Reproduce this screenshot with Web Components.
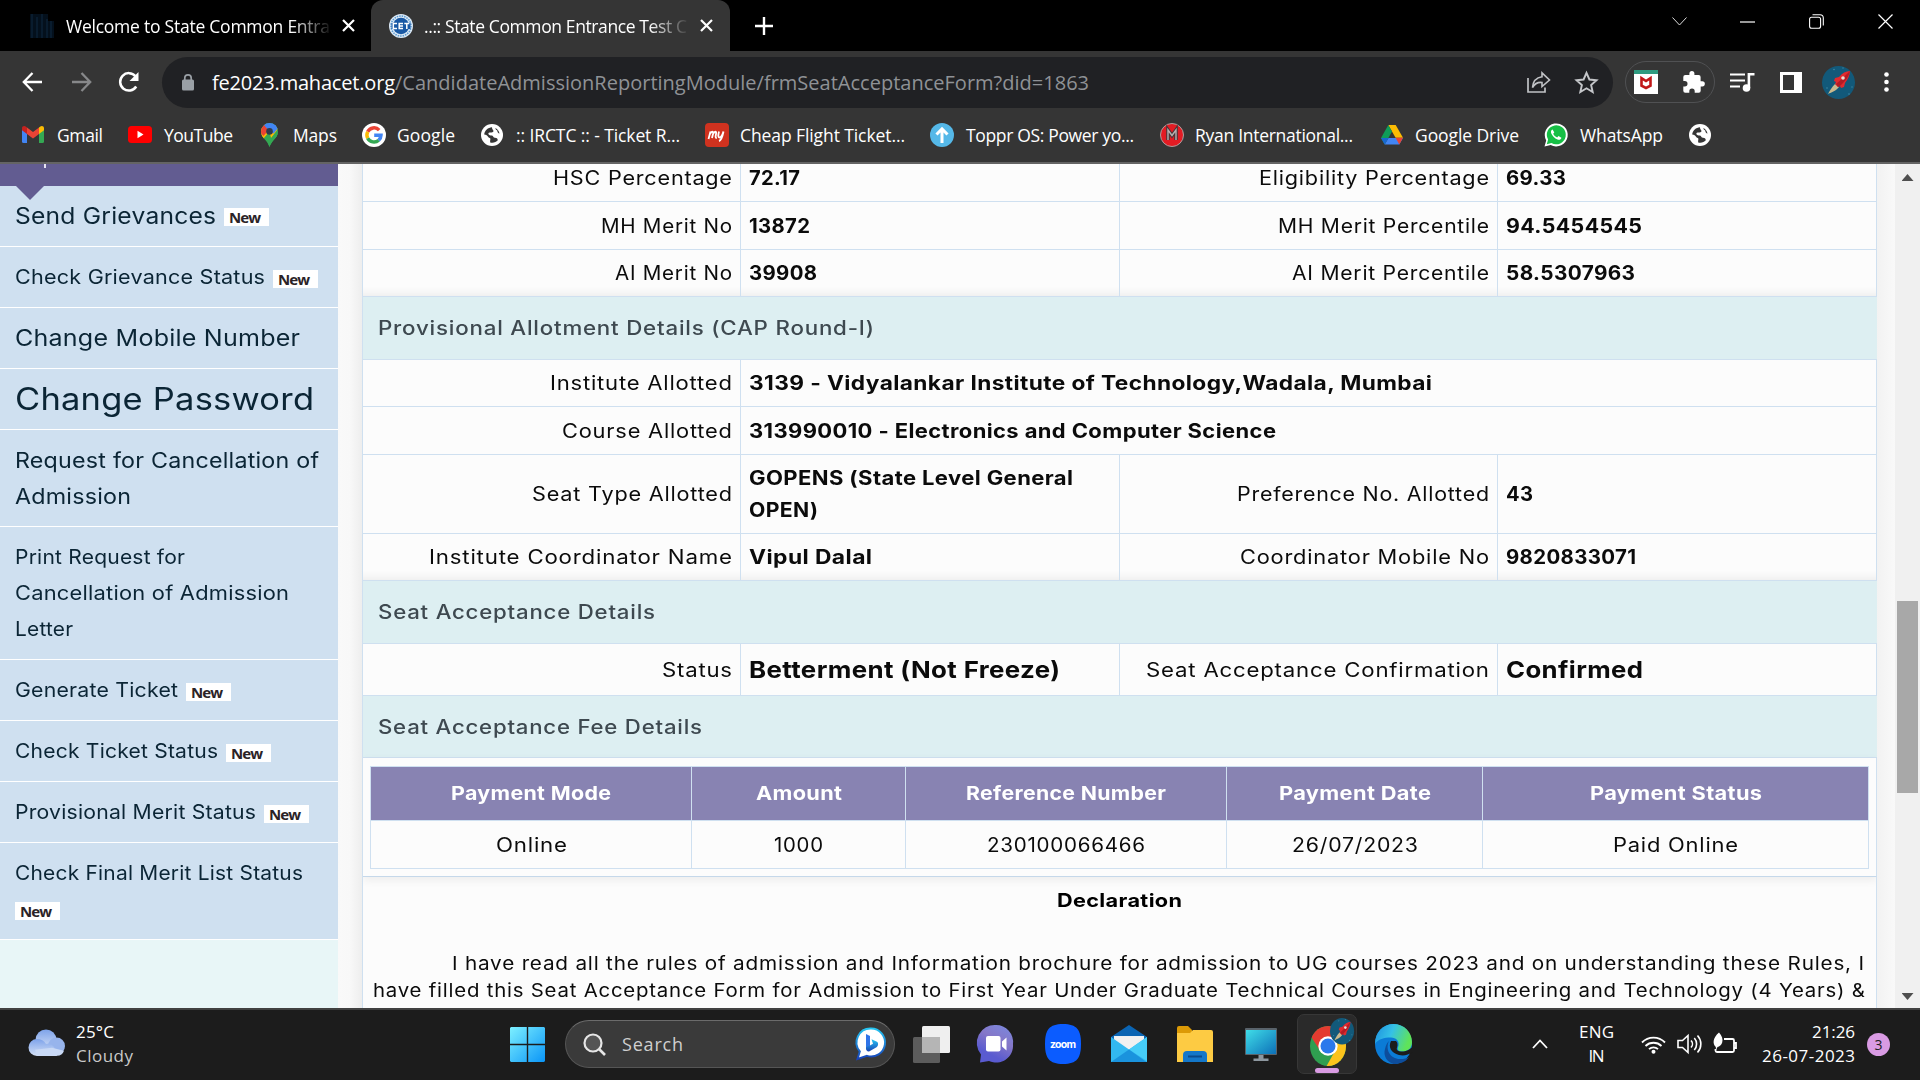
<!DOCTYPE html>
<html lang="en">
<head>
<meta charset="utf-8">
<title>State Common Entrance Test Cell</title>
<style>
html,body{margin:0;height:100%;overflow:hidden;background:#000}
body{display:flex;flex-direction:column;width:1920px;height:1080px}
</style>
</head>
<body>
<tab-strip></tab-strip>
<browser-toolbar></browser-toolbar>
<bookmarks-bar></bookmarks-bar>
<page-view></page-view>
<task-bar></task-bar>
<script>
const UI = '"Open Sans","Noto Sans",sans-serif';
const define = (name, css, html) => customElements.define(name, class extends HTMLElement {
  connectedCallback() {
    if (this.shadowRoot) return;
    const t = document.createElement('template');
    t.innerHTML = `<style>*,:host{box-sizing:border-box}${css}</style>${typeof html === 'function' ? html(this) : html}`;
    this.attachShadow({mode: 'open'}).append(t.content.cloneNode(true));
  }
});

/* Inline run of text that spans the width in "w": by tracking alone, or, where --track
   gives the tracking, by widening the letters. */
customElements.define('fit-text', class extends HTMLElement {
  connectedCallback() {
    if (this.shadowRoot) return;
    this.attachShadow({mode: 'open'}).innerHTML =
      '<style>:host{display:inline-block;white-space:nowrap;flex:none;text-align:left}span{display:inline-block;transform-origin:0 50%}</style><span><slot></slot></span>';
    const w = +this.getAttribute('w'), n = this.textContent.length, s = this.shadowRoot.querySelector('span');
    if (!w || n < 2) return;
    const track = parseFloat(getComputedStyle(this).getPropertyValue('--track'));
    if (isNaN(track)) {
      this.style.letterSpacing = ((w - s.getBoundingClientRect().width) / (n - 1)).toFixed(3) + 'px';
    } else {
      this.style.letterSpacing = track + 'px';
      s.style.transform = `scaleX(${(w / (s.getBoundingClientRect().width - track)).toFixed(4)})`;
    }
    this.style.width = w + 'px';
  }
});

const ROCKET = `<circle cx="16.5" cy="16.5" r="16.5" fill="#12597a"/><g fill="#3b87a5"><circle cx="12" cy="3.5" r=".8"/><circle cx="5" cy="22" r=".8"/><circle cx="27" cy="28" r=".8"/><circle cx="21" cy="2" r=".7"/><circle cx="30" cy="21" r=".7"/></g>
<path d="M13 18l4 3C14 25 10 26 6 28c2-4 4-7 7-10z" fill="#c9b98d"/><path d="M28 5c-4 0-8 2-11 6l-4 1-1 3 2 1-1 2 3 3 2-1 1 2 3-1 1-4c3-4 5-8 5-12z" fill="#e02a2f"/><path d="M28 5c-3 3-8 8-14 13l2 3 2-1c5-5 9-9 10-15z" fill="#b51b24"/><circle cx="21" cy="12" r="1.8" fill="#e8dcd4"/>`;
const GLOBE = `<circle cx="11" cy="11" r="11" fill="#fff"/><path d="M11 3.2C7 3.4 3.6 6.500 3.200 10.500c1.800.4 3.400 1 3.800 2.300.3 1 1.800.8 2.300 1.800.3.900-.4 1.800-.1 3.800 3 .8 5.800-.2 7.600-2.200-.2-1.700-1.200-2.300-2.800-2.400-1.900-.1-1.600-1.700-3-2.200-1.600-.6-3.200-.2-3.600-1.700-.3-1.400 1.300-1.600 2.600-1.500 1.500.1 2.700-.3 2.400-1.700-.2-1-1.500-1.300-1.400-3.500z" fill="#353535"/><path d="M14.500 4c-.3 1.300.6 2 1.800 2.600 0 1.900.8 2.700 2.200 2.900C18 7 16.500 5 14.500 4z" fill="#353535"/>`;
/* name: [width, height, markup] */
const ICONS = {
  fav1: [24,24,`<rect width="24" height="24" fill="#04101c"/><path d="M2 0v24M7 3v21M12 0v24M17 5v19M21 7v17" stroke="#0b2034" stroke-width="1.500"/><path d="M18 0h6v7h-6z" fill="#000"/>`],
  close: [13,13,`<path d="M1 1l11 11M12 1L1 12" stroke="#fff" stroke-width="2.200"/>`],
  cet: [24,24,`<circle cx="12" cy="12" r="12" fill="#dbe9f6"/><circle cx="12" cy="12" r="10" fill="none" stroke="#5c9ad0" stroke-width="1.500" stroke-dasharray="1.500 1"/><circle cx="12" cy="12" r="8.200" fill="#1959a5"/><path d="M2.500 9h19v6h-19z" fill="#1959a5"/><path d="M8 9.600H4.300v4.800H8M14 9.600h-3.800v4.800H14M10.200 12H14M15.300 9.600h5M17.800 9.600v5.400" fill="none" stroke="#fff" stroke-width="1.500"/>`],
  plus: [18,18,`<path d="M9 0v18M0 9h18" stroke="#fff" stroke-width="2.400"/>`],
  wchev: [15,9,`<path d="M.5.5l7 7.500 7-7.500" fill="none" stroke="#ddd" stroke-width="1"/>`],
  wmin: [15,2,`<path d="M0 1h15" stroke="#fff" stroke-width="1.200"/>`],
  wmax: [15,15,`<rect x=".6" y="3.300" width="11" height="11" rx="2" fill="none" stroke="#fff" stroke-width="1.100"/><path d="M3.500.8h7.500a3.300 3.300 0 0 1 3.300 3.300v7.400" fill="none" stroke="#fff" stroke-width="1.100"/>`],
  wclose: [15,15,`<path d="M.5.5l14 14M14.500.5l-14 14" stroke="#fff" stroke-width="1.200"/>`],
  back: [21,20,`<path d="M20 10H2M10.500 1L1.800 10l8.700 9" fill="none" stroke="#fff" stroke-width="2.300"/>`],
  fwd: [21,20,`<path d="M1 10h18M10.500 1l8.700 9-8.700 9" fill="none" stroke="#87888a" stroke-width="2.300"/>`],
  reload: [22,22,`<path d="M18.200 15.500A8.700 8.700 0 1 1 17.500 5.200" fill="none" stroke="#fff" stroke-width="2.500"/><path d="M20.500 1v9h-9z" fill="#fff"/>`],
  lock: [12,17,`<rect y="5.500" width="12" height="11" rx="1.500" fill="#9aa0a6"/><path d="M2.800 7V4a3.200 3.200 0 0 1 6.400 0v3" fill="none" stroke="#9aa0a6" stroke-width="1.700"/>`],
  share: [24,22,`<path d="M1 7v14h17v-4.500" fill="none" stroke="#c0c2c5" stroke-width="1.700"/><path d="M15 1.800L22.500 9 15 15.500v-4C10.500 11 7.500 13 5.500 16.500 6 10.500 9.500 6.600 15 5.800z" fill="none" stroke="#c0c2c5" stroke-width="1.600"/>`],
  star: [23,22,`<path d="M11.500 1.800l2.900 6.700 7.100.7-5.400 4.800 1.600 7-6.200-3.700L5.300 21l1.600-7L1.500 9.200l7.100-.7z" fill="none" stroke="#c4c6c9" stroke-width="1.900"/>`],
  mcafee: [24,24,`<rect width="24" height="24" fill="#fff"/><path d="M0 0h24v4H0z" fill="#2f9b80"/><path d="M7.500 8.200v7.500L12 18l4.500-2.300V8.200L12 11z" fill="none" stroke="#c01818" stroke-width="2.600"/>`],
  puzzle: [22,22,`<path d="M19.300 10.300h-1.700V6a2 2 0 0 0-2-2h-4.200V2.500a2.500 2.500 0 0 0-5 0V4H2.300a2 2 0 0 0-2 2v4.100h1.500a2.700 2.700 0 0 1 0 5.400H.3v4.200a2 2 0 0 0 2 2h4v-1.500a2.700 2.700 0 0 1 5.400 0v1.500h4a2 2 0 0 0 2-2v-4.300h1.600a2.550 2.550 0 0 0 0-5.100z" fill="#fff"/>`],
  queue: [25,21,`<path d="M0 2.500h15M0 8.500h15M0 14.500h10" stroke="#fff" stroke-width="2.200"/><circle cx="16.500" cy="16" r="3.800" fill="#fff"/><path d="M18.900 16V2.300h5.600" fill="none" stroke="#fff" stroke-width="2.600"/>`],
  panel: [22,21,`<path d="M0 0h22v21H0z" fill="#fff"/><path d="M3 3h11v15H3z" fill="#353535"/>`],
  rocket: [33,33,ROCKET],
  dots: [5,20,`<g fill="#fff"><circle cx="2.500" cy="2.500" r="2.300"/><circle cx="2.500" cy="10" r="2.300"/><circle cx="2.500" cy="17.500" r="2.300"/></g>`],
  gmail: [22,17,`<path d="M0 2v13.500A1.500 1.500 0 0 0 1.500 17H5V6z" fill="#4285f4"/><path d="M22 2v13.500a1.500 1.500 0 0 1-1.500 1.500H17V6z" fill="#34a853"/><path d="M17 1.500V8l5-3.700V2.200C22 .2 19.800-.6 18.300.6z" fill="#fbbc04"/><path d="M5 8V1.500l6 4.600 6-4.600V8l-6 4.500z" fill="#ea4335"/><path d="M0 2.200v2.100L5 8V1.500L3.700.6C2.200-.6 0 .2 0 2.200z" fill="#c5221f"/>`],
  youtube: [24,17,`<rect width="24" height="17" rx="3.500" fill="#f00"/><path d="M9.500 4.800v7.400l6-3.700z" fill="#fff"/>`],
  maps: [17,24,`<clipPath id="m"><path d="M8.500 0A8.300 8.300 0 0 0 0 8.400c0 4 2.200 6.200 4.300 8.700 1.700 2 3.300 4.200 4.200 6.900.9-2.700 2.500-4.900 4.200-6.900C14.800 14.600 17 12.400 17 8.400A8.300 8.300 0 0 0 8.500 0z"/></clipPath><g clip-path="url(#m)"><path d="M0 0h17v24H0z" fill="#34a853"/><path d="M8.500 8.400L0 18.500V5l4-2.500z" fill="#fbbc04"/><path d="M8.500 8.400L3 15 14 2l3 4-7 9z" fill="#fbbc04"/><path d="M17 5v19H5l11-14z" fill="#34a853"/><path d="M-2 8L4 .5l5 5L2.500 13z" fill="#ea4335"/><path d="M3 2l5-4 9 5-8.500 5.400z" fill="#4285f4"/><path d="M14 1l-5.500 7.400 4 2L18 4z" fill="#4285f4"/></g><circle cx="8.500" cy="8.400" r="3.300" fill="#313a4a"/>`],
  google: [24,24,`<circle cx="12" cy="12" r="12" fill="#fff"/><g fill="none" stroke-width="3.500"><path d="M17.200 7.100A7.100 7.100 0 0 0 5.700 8.800" stroke="#ea4335"/><path d="M5.700 8.800a7.100 7.100 0 0 0 0 6.400" stroke="#fbbc05"/><path d="M5.700 15.200a7.100 7.100 0 0 0 11 2" stroke="#34a853"/><path d="M16.700 17.200A7.100 7.100 0 0 0 19 12.200h-6.800" stroke="#4285f4"/></g>`],
  globe: [22,22,GLOBE],
  my: [24,24,`<rect width="24" height="24" rx="4" fill="#d0321f"/><path d="M3.500 16l2-7.500M5 11c1.500-3 3.500-3 3 0l-1 4M8 11c1.500-3 3.800-3 3 0-.5 2.500-.8 4 .8 4M14 8.500c-1 4-1 6 .5 6s3-3 4-6c-1 5-2 9-4.500 9.500" fill="none" stroke="#fff" stroke-width="1.800"/>`],
  toppr: [24,24,`<circle cx="12" cy="12" r="12" fill="#55b8e8"/><path d="M12 20V7M6.500 11.500L12 5.800l5.500 5.700" fill="none" stroke="#fff" stroke-width="3"/>`],
  ryan: [24,24,`<circle cx="12" cy="12" r="11.500" fill="#e31b23" stroke="#a9a0a0"/><path d="M8 17V7l4 5.500L16 7v10" fill="none" stroke="#44383a" stroke-width="3.600"/><path d="M8 17V7l4 5.500L16 7v10" fill="none" stroke="#b9b0b0" stroke-width="1.400"/>`],
  drive: [22,20,`<path d="M7.300 0h7.400L22 12.800h-7.400z" fill="#fbbc04"/><path d="M7.300 0L11 6.500 3.700 19.500 0 12.900z" fill="#0f9d58"/><path d="M7.500 12.900H22l-3.700 6.600H3.700z" fill="#4285f4"/><path d="M7.500 12.900L3.700 19.500 0 12.900z" fill="#1967d2"/><path d="M14.600 12.800H22l-3.700 6.700z" fill="#ea4335"/>`],
  whatsapp: [24,24,`<path d="M.5 23.500l1.700-6A11.500 11.500 0 1 1 6.700 22z" fill="#fff"/><path d="M2.800 21.200l1.300-4.600A9.500 9.500 0 1 1 7.500 20z" fill="#16bf45"/><path d="M8.600 6.500c-1.500.5-2 2-1.400 3.700a12 12 0 0 0 6.300 6.300c2 .7 3.500 0 3.900-1.800l-2.900-1.600-1.300 1.400c-1.900-.7-3.100-2-4-3.700l1.100-1.400z" fill="#fff"/>`],
  cloud: [37,27,`<defs><linearGradient id="c" x2="0" y2="1"><stop stop-color="#7ea3ea"/><stop offset="1" stop-color="#d5e1f6"/></linearGradient></defs><circle cx="18" cy="11" r="10.500" fill="url(#c)"/><circle cx="28.500" cy="17" r="8.500" fill="#97b4ec"/><path d="M9 27a8.500 8.500 0 0 1 0-17c4 0 7 1.500 9 5 3-1 6 0 8 3l3 9z" fill="url(#c)"/><path d="M9 26.800h20a7.500 7.500 0 0 0 7-5l-12-3-17 2z" fill="#c9d9f5"/>`],
  win: [35,35,`<defs><linearGradient id="w" x2="1" y2="1"><stop stop-color="#7df0ff"/><stop offset="1" stop-color="#0a95f7"/></linearGradient></defs><path d="M1 0h15.800v16.800H0V1zM18.200 0H34l1 1v15.800H18.200zM0 18.200h16.800V35H1l-1-1zM18.200 18.200H35V34l-1 1H18.200z" fill="url(#w)"/>`],
  search: [23,23,`<circle cx="10" cy="10" r="8.500" fill="#555" stroke="#e6e6e6" stroke-width="2.200"/><path d="M16 16l6 6" stroke="#e6e6e6" stroke-width="2.600"/>`],
  bing: [30,34,`<defs><linearGradient id="b" x2="0" y2="1"><stop stop-color="#25c5f2"/><stop offset="1" stop-color="#1743b8"/></linearGradient></defs><path d="M15 1.500a14 14 0 1 1-4 27.400L1.500 32l2.300-7.500A14 14 0 0 1 15 1.500z" fill="#fff" stroke="url(#b)" stroke-width="2"/><path d="M10 7l4 2v10l-2 2.500-2-1.500z" fill="#2f74e8"/><path d="M10 20l4-1.500 3-1.700-1.500-4.500 5.500 2.500c1.600 1 1.500 4-.5 5.500l-7 4c-2 .8-3.500-1-3.500-2.500z" fill="url(#b)"/>`],
  tasks: [37,37,`<rect y="11" width="27" height="26" rx="1.500" fill="#5c5c5c"/><rect x="9" y="0" width="28" height="27" rx="1.500" fill="#efefef"/><path d="M9 11h18v16H9z" fill="#b5b5b5"/>`],
  chat: [34,38,`<defs><linearGradient id="ch" x1=".8" x2=".3" y2="1"><stop stop-color="#7b87dd"/><stop offset=".4" stop-color="#8577c8"/><stop offset=".8" stop-color="#5a5bd0"/></linearGradient></defs><path d="M17 0a17 17 0 0 1 17 19 17 17 0 0 1-24 17L1 37.500l1-8A18 18 0 0 1 17 0z" fill="url(#ch)"/><rect x="7" y="11" width="14.500" height="15.500" rx="2" fill="#fff"/><path d="M23 16.500l4.500-4v13l-4.500-4z" fill="#fff"/>`],
  zoom: [36,40,`<path d="M18 0c14 0 18 6 18 20s-4 20-18 20S0 34 0 20 4 0 18 0z" fill="#0b5cff"/>`],
  mail: [36,38,`<path d="M0 12L18 0l18 12v13H0z" fill="#0a64b3"/><path d="M3 11h30v6L18 28 3 17z" fill="#eceff2"/><path d="M0 12l18 12.500L36 12v25H0z" fill="#32b8f0"/><path d="M18 24.500L36 12v24z" fill="#46cdf8"/><path d="M0 37l18-12.500L35.500 37z" fill="#1a93dd"/><path d="M3 12h30L18 24z" fill="#f1f1f1"/>`],
  folder: [36,37,`<path d="M0 2a2 2 0 0 1 2-2h9l4 4v6H0z" fill="#dc9a06"/><path d="M0 7h13l3-3h18a2 2 0 0 1 2 2v30H0z" fill="#fdcb43"/><path d="M6 36V29a4 4 0 0 1 4-4h16a4 4 0 0 1 4 4v7z" fill="#1477c9"/><path d="M11 30.500h14" stroke="#0a4b8c" stroke-width="2"/>`],
  monitor: [32,33,`<defs><linearGradient id="mo" x2="1" y2="1"><stop stop-color="#3fdde8"/><stop offset="1" stop-color="#0d70b8"/></linearGradient></defs><rect width="32" height="27" rx="1" fill="#59636b"/><rect x="1" y="2" width="30" height="24" fill="url(#mo)"/><path d="M13.500 27h5v3.500h5V33h-15v-2.500h5z" fill="#8d979f"/>`],
  chrome: [44,50,`<clipPath id="cc"><ellipse cx="18" cy="30" rx="18" ry="20"/></clipPath><g clip-path="url(#cc)"><path d="M0 10h40v40H0z" fill="#2f9e50"/><path d="M18 21h20v30H16l9-16z" fill="#fcc31c"/><path d="M18 21l-9 12L0 19V8h38v13z" fill="#e43b30"/></g><circle cx="18" cy="30" r="9.700" fill="#fff"/><circle cx="18" cy="30" r="7.500" fill="#2b79ec"/><g transform="translate(20 2) scale(.73 .8)">${ROCKET}</g>`],
  edge: [37,40,`<defs><linearGradient id="e1" x2="1" y2=".3"><stop stop-color="#1c8fe0"/><stop offset=".5" stop-color="#35c1e6"/><stop offset="1" stop-color="#5fe35a"/></linearGradient></defs><ellipse cx="18.500" cy="20" rx="18.500" ry="20" fill="#0b7bd6"/><path d="M0 20C0 8 8 0 18.500 0S37 8 37 18c0 6-4 9.500-9 9.500-4 0-6-1.500-5-4 2.500-6-2-10-7-10C9 13.500 3 15 0 20z" fill="url(#e1)"/><path d="M14 17c-4 8 1 18 11 18 4 0 7-.5 9-2-4 6-10 7-15.500 7C12 38 8 32 10 25c1-4 2-6 4-8z" fill="#0d4d9c"/><path d="M16 17c-3 6 0 12 8 14 5 1 9 0 14-3v-6c-3 4-7 5.500-11 5.500-4 0-6-1.500-5-4 1-3 .5-5-1-6.500z" fill="#1c1c1c"/>`],
  up: [16,10,`<path d="M1 9l7-7.500L15 9" fill="none" stroke="#fff" stroke-width="1.800"/>`],
  wifi: [25,19,`<g fill="none" stroke="#fff" stroke-width="1.800"><path d="M1 7.500a16 16 0 0 1 23 0M4.500 11a11.500 11.500 0 0 1 16 0M8 14.200a6.600 6.600 0 0 1 9 0"/></g><circle cx="12.500" cy="16.800" r="2" fill="#fff"/>`],
  sound: [25,20,`<path d="M1 6.500h4.500L11 1.500v17l-5.500-5H1z" fill="none" stroke="#fff" stroke-width="1.600"/><path d="M14 6.500a5 5 0 0 1 0 7M17.300 4a9 9 0 0 1 0 12M20.500 1.500a12.500 12.500 0 0 1 0 17" fill="none" stroke="#fff" stroke-width="1.600"/>`],
  battery: [25,20,`<path d="M12 5h8.500a1.500 1.500 0 0 1 1.500 1.500v10a1.500 1.500 0 0 1-1.500 1.500H5a1.500 1.500 0 0 1-1.500-1.500V15M22 9h2v5h-2" fill="none" stroke="#fff" stroke-width="1.800"/><path d="M7-1.500c3 3 4.200 7 3.200 10-.8 2.500-2.700 4-4.700 4.500L4 16l-.2-3C.5 10 .5 4 7-1.500z" fill="#fff"/>`]
};
define('ui-icon', ':host{display:block;flex:none}svg{display:block;overflow:visible}', el => {
  const [w, h, m] = ICONS[el.getAttribute('name')];
  return `<svg width="${w}" height="${h}" viewBox="0 0 ${w} ${h}">${m}</svg>`;
});
/* An icon that starts "gap" px after what precedes it. */
const ico = (name, gap = 0, up = 0) => `<ui-icon name="${name}" style="margin:0 0 ${up}px ${gap}px"></ui-icon>`;
const txt = (s, w, gap = 0, extra = '') => `<fit-text w="${w}" style="margin-left:${gap}px;${extra}">${s}</fit-text>`;

define('tab-strip', `:host{display:flex;height:51px;background:#000;font:17.500px ${UI};color:#fff;align-items:center;flex:none}
.t{display:flex;align-items:center;height:51px;flex:none}
.off{width:371px}.on{width:359px;background:#353535;border-radius:12px 12px 0 0}
.f{-webkit-mask:linear-gradient(90deg,#000 86%,transparent 101%)}`,
`<div class="t off">${ico('fav1',30)}<span class="f">${txt('Welcome to State Common Entra',264,12)}</span>${ico('close',12)}</div>
<div class="t on">${ico('cet',18)}<span class="f">${txt('..:: State Common Entrance Test C',263,11)}</span>${ico('close',13)}</div>
${ico('plus',25)}${ico('wchev',899,8)}${ico('wmin',53,8)}${ico('wmax',54,8)}${ico('wclose',54,8)}`);

define('browser-toolbar', `:host{display:flex;height:62px;background:#353535;align-items:center;font:20px ${UI};color:#fff;flex:none}
.o{display:flex;align-items:center;width:1451px;height:51px;border-radius:26px;background:#202124;margin-left:22px;flex:none}
.g{color:#8f9296}.p{display:flex;align-items:center;width:90px;height:42px;border:1.500px solid #505153;border-radius:21px;margin-left:12px;flex:none}`,
`${ico('back',22)}${ico('fwd',28)}${ico('reload',26)}
<div class="o">${ico('lock',20)}${txt('fe2023.mahacet.org',183,18)}<span class="g">${txt('/CandidateAdmissionReportingModule/frmSeatAcceptanceForm?did=1863',694)}</span>${ico('share',438)}${ico('star',24)}</div>
<div class="p">${ico('mcafee',7.500)}${ico('puzzle',25)}</div>${ico('queue',15)}${ico('panel',25)}${ico('rocket',20)}${ico('dots',29)}`);

define('bookmarks-bar', `:host{display:flex;height:51px;padding-bottom:6px;background:#353535;border-bottom:2px solid #646464;align-items:center;font:17.500px ${UI};color:#fff;flex:none}`,
[['gmail',22,'Gmail',46,13],['youtube',25,'YouTube',69,12],['maps',28,'Maps',44,15],['google',25,'Google',58,11],['globe',26,':: IRCTC :: - Ticket R...',164,13],
['my',25,'Cheap Flight Ticket...',165,11],['toppr',25,'Toppr OS: Power yo...',168,12],['ryan',26,'Ryan International...',158,11],['drive',28,'Google Drive',104,12],['whatsapp',25,'WhatsApp',83,12]]
.map(([i,g,s,w,tg]) => ico(i,g) + txt(s,w,tg)).join('') + ico('globe',26));

define('new-badge', `:host{display:inline-flex;width:45px;height:18px;background:#fff;color:#2b2327;font:700 15px/18px "Noto Sans",sans-serif;padding-left:5px;flex:none}`, txt('New',32));

define('menu-entry', `:host{display:flex;flex-direction:column;justify-content:center;background:#cfe0f0;border-bottom:1px solid #fff;padding-left:15px;color:#0b2535;flex:none}
.l{display:flex;align-items:center;height:36px}new-badge{margin:3px 0 0 8px;--track:initial}.l>new-badge:first-child{margin-left:0}`,
el => el.getAttribute('lines').split('|').map(l => {
  const [s, w] = l.split('~');
  const badge = s.endsWith('*') ? '<new-badge></new-badge>' : '';
  const t = s.replace('*', '');
  return `<div class="l">${t ? txt(t, w) : ''}${badge}</div>`;
}).join(''));

const MENU = [['Send Grievances*~201',22.5,61],['Check Grievance Status*~250',20,61],['Change Mobile Number~285',22.5,61],['Change Password~299',31,61],
['Request for Cancellation of~304|Admission~116',21.5,97],['Print Request for~170|Cancellation of Admission~274|Letter~58',20,133],
['Generate Ticket*~163',20,61],['Check Ticket Status*~203',20,61],['Provisional Merit Status*~241',20,61],['Check Final Merit List Status~288|*',20,97]];
define('side-menu', `:host{display:flex;flex-direction:column;width:338px;background:#e8f6f7;font-family:Inter,sans-serif;--track:.2;flex:none;position:relative}
.h{height:22px;background:#625c91;flex:none}.h i{display:block;width:2px;height:4px;background:#e6e3f2;margin-left:44px}
.a{position:absolute;left:16px;top:22px;width:28px;height:14px;background:#625c91;clip-path:polygon(0 0,100% 0,50% 100%);z-index:1}`,
`<div class="h"><i></i></div><div class="a"></div>` + MENU.map(([l,f,h]) => `<menu-entry lines="${l}" style="font-size:${f}px;height:${h}px;${f > 22 ? 'padding-bottom:2px' : ''}"></menu-entry>`).join(''));

define('detail-row', `:host{display:grid;grid-template-columns:378px 379px 378px 1fr;border-bottom:1px solid #cfe0f0;flex:none}
div{display:flex;flex-direction:column;justify-content:center;border-right:1px solid #cfe0f0;padding:0 8px}
.k{align-items:flex-end;font-size:19.500px}.v{--track:.35;font-weight:700;align-items:flex-start;line-height:32px}.wide{grid-column:span 3}.v,.k{min-width:0}`,
el => { const c = el.getAttribute('cells').split('|'), f = el.getAttribute('vsize') || 19.5;
  return c.map((x, i) => `<div class="${i % 2 ? 'v' : 'k'}${c.length === 2 && i ? ' wide' : ''}" ${i % 2 ? `style="font-size:${f}px"` : ''}>${x.split('/').map(p => { const [s, w] = p.split('~'); return `<fit-text w="${w}">${s}</fit-text>`; }).join('')}</div>`).join(''); });
define('section-head', `:host{display:flex;align-items:center;background:#ddeff2;color:#3e4950;font-weight:500;font-size:19.500px;padding-left:15px;border-bottom:1px solid #cfe0f0;flex:none}`, '<slot></slot>');
define('fee-table', `:host{display:grid;grid-template-columns:321px 214px 321px 256px 386px;grid-template-rows:54px 47px;border:1px solid #cfe0f0;border-right:0;margin:8px 7px 8px 7px;flex:none}
div{display:flex;align-items:center;justify-content:center;border-right:1px solid #cfe0f0}.h{--track:.3;background:#8883b2;color:#fff;font-weight:700;font-size:19px;border-bottom:1px solid #cfe0f0}.c{font-size:19.500px}`,
[['Payment Mode',160],['Amount',86],['Reference Number',200],['Payment Date',152],['Payment Status',172]].map(x => `<div class="h">${txt(...x)}</div>`).join('') +
[['Online',71],['1000',49],['230100066466',158],['26/07/2023',126],['Paid Online',125]].map(x => `<div class="c">${txt(...x)}</div>`).join(''));

define('seat-form', `:host{display:flex;flex-direction:column;width:1515px;background:#fcfcfc;border-left:1px solid #cfe0f0;color:#0b0b0b;font-family:Inter,sans-serif;--track:.7;flex:none;overflow:hidden}
.fee{border-bottom:1px solid #c5d8ea;border-right:1px solid #cfe0f0;box-shadow:0 3px 9px #0001;height:119px;flex:none}
.lift{box-shadow:inset 0 -12px 10px -10px #00000012}
.dec{border-right:1px solid #cfe0f0;flex:1;font-size:18.500px;display:flex;flex-direction:column}
.t{--track:.3;font-weight:700;font-size:18.500px;height:27px;line-height:27px;margin-top:10px;text-align:center;color:#000}
.p{height:27px;line-height:27px;display:flex;flex:none}`,
`<detail-row style="height:48px;margin-top:-10px" cells="HSC Percentage~179|72.17~51|Eligibility Percentage~230|69.33~60"></detail-row>
<detail-row style="height:48px" cells="MH Merit No~131|13872~61|MH Merit Percentile~211|94.5454545~136"></detail-row>
<detail-row class="lift" style="height:47px" cells="AI Merit No~117|39908~68|AI Merit Percentile~197|58.5307963~129"></detail-row>
<section-head style="height:63px">${txt('Provisional Allotment Details (CAP Round-I)',496)}</section-head>
<detail-row style="height:47px" cells="Institute Allotted~182|3139 - Vidyalankar Institute of Technology,Wadala, Mumbai~683"></detail-row>
<detail-row style="height:48px" cells="Course Allotted~170|313990010 - Electronics and Computer Science~527"></detail-row>
<detail-row style="height:79px" cells="Seat Type Allotted~200|GOPENS (State Level General~324/OPEN)~69|Preference No. Allotted~252|43~27"></detail-row>
<detail-row class="lift" style="height:47px" cells="Institute Coordinator Name~303|Vipul Dalal~123|Coordinator Mobile No~249|9820833071~130"></detail-row>
<section-head style="height:63px">${txt('Seat Acceptance Details',277)}</section-head>
<detail-row style="height:52px" vsize="23.5" cells="Status~70|Betterment (Not Freeze)~311|Seat Acceptance Confirmation~343|Confirmed~137"></detail-row>
<section-head style="height:62px">${txt('Seat Acceptance Fee Details',324)}</section-head>
<div class="fee"><fee-table></fee-table></div>
<div class="dec"><div class="t">${txt('Declaration',125)}</div>
<div class="p" style="margin-top:36px">${txt('I have read all the rules of admission and Information brochure for admission to UG courses 2023 and on understanding these Rules, I',1412,89)}</div>
<div class="p">${txt('have filled this Seat Acceptance Form for Admission to First Year Under Graduate Technical Courses in Engineering and Technology (4 Years) &amp;',1492,10)}</div>
<div class="p"><span style="margin-left:424px">(</span><span style="margin-left:192px">)</span></div></div>`);

define('scroll-bar', `:host{display:flex;flex-direction:column;align-items:center;width:25px;background:#f0f0f0;flex:none}
.u,.d{width:12px;height:7px;background:#4f4f4f}.u{clip-path:polygon(50% 0,100% 100%,0 100%);margin-top:10px}.d{clip-path:polygon(0 0,100% 0,50% 100%);margin-top:200px}
.t{width:21px;height:192px;background:#a8a8a8;margin-top:420px}`, `<div class="u"></div><div class="t"></div><div class="d"></div>`);

define('page-view', `:host{display:flex;height:844px;background:#fafafa;flex:none;overflow:hidden}
.g{width:24px;background:linear-gradient(90deg,#f9f9f9,#f8f8f8 50%,#eeeeee);flex:none}.r{width:18px;background:linear-gradient(90deg,#f2f2f2,#f9f9f9);flex:none}`,
`<side-menu></side-menu><div class="g"></div><seat-form></seat-form><div class="r"></div><scroll-bar></scroll-bar>`);

define('task-bar', `:host{display:flex;height:72px;background:#1c1c1c;border-top:2px solid #414141;padding-bottom:2px;align-items:center;font:17px ${UI};color:#fff;flex:none}
.w{display:flex;flex-direction:column;align-items:flex-start;line-height:24px}.dim{color:#c9c9c9}
.s{display:flex;align-items:center;width:330px;height:48px;border-radius:24px;background:#3a3a3a;border:1px solid #555;border-top-color:#6b6b6b;margin-left:20px;font-size:18px;color:#cfcfcf;flex:none}
.z{position:relative;display:flex;margin-left:32px}.z span{position:absolute;inset:0;display:flex;align-items:center;justify-content:center;font:700 10.500px Inter,sans-serif}
.c{position:relative;width:60px;height:60px;border:1px solid #373737;border-radius:7px;background:#2a2a2a;margin-left:20px;flex:none}
.c ui-icon{position:absolute;left:12px;top:1px}.c i{position:absolute;left:17px;bottom:0;width:24px;height:5px;border-radius:3px;background:#d99be3}
.n{width:23px;height:23px;border-radius:50%;background:#d99be3;color:#222;font-size:14px;display:flex;align-items:center;justify-content:center;margin-left:12px;flex:none}`,
`${ico('cloud',28,4)}<div class="w" style="margin-left:11px">${txt('25°C',38)}<span class="dim">${txt('Cloudy',57)}</span></div>
${ico('win',377)}<div class="s">${ico('search',17)}${txt('Search',61,16)}${ico('bing',173)}</div>
${ico('tasks',18)}${ico('chat',29)}<div class="z">${ico('zoom')}<span>${txt('zoom',26)}</span></div>
${ico('mail',30)}${ico('folder',30)}${ico('monitor',32)}<div class="c">${ico('chrome')}<i></i></div>${ico('edge',18)}
${ico('up',120)}<div class="w" style="margin-left:31px;align-items:center">${txt('ENG',35)}${txt('IN',16)}</div>
${ico('wifi',27)}${ico('sound',11)}${ico('battery',10)}
<div class="w" style="margin-left:24px;width:94px;align-items:flex-end">${txt('21:26',43)}${txt('26-07-2023',93)}</div><div class="n">3</div>`);
</script>
</body>
</html>
